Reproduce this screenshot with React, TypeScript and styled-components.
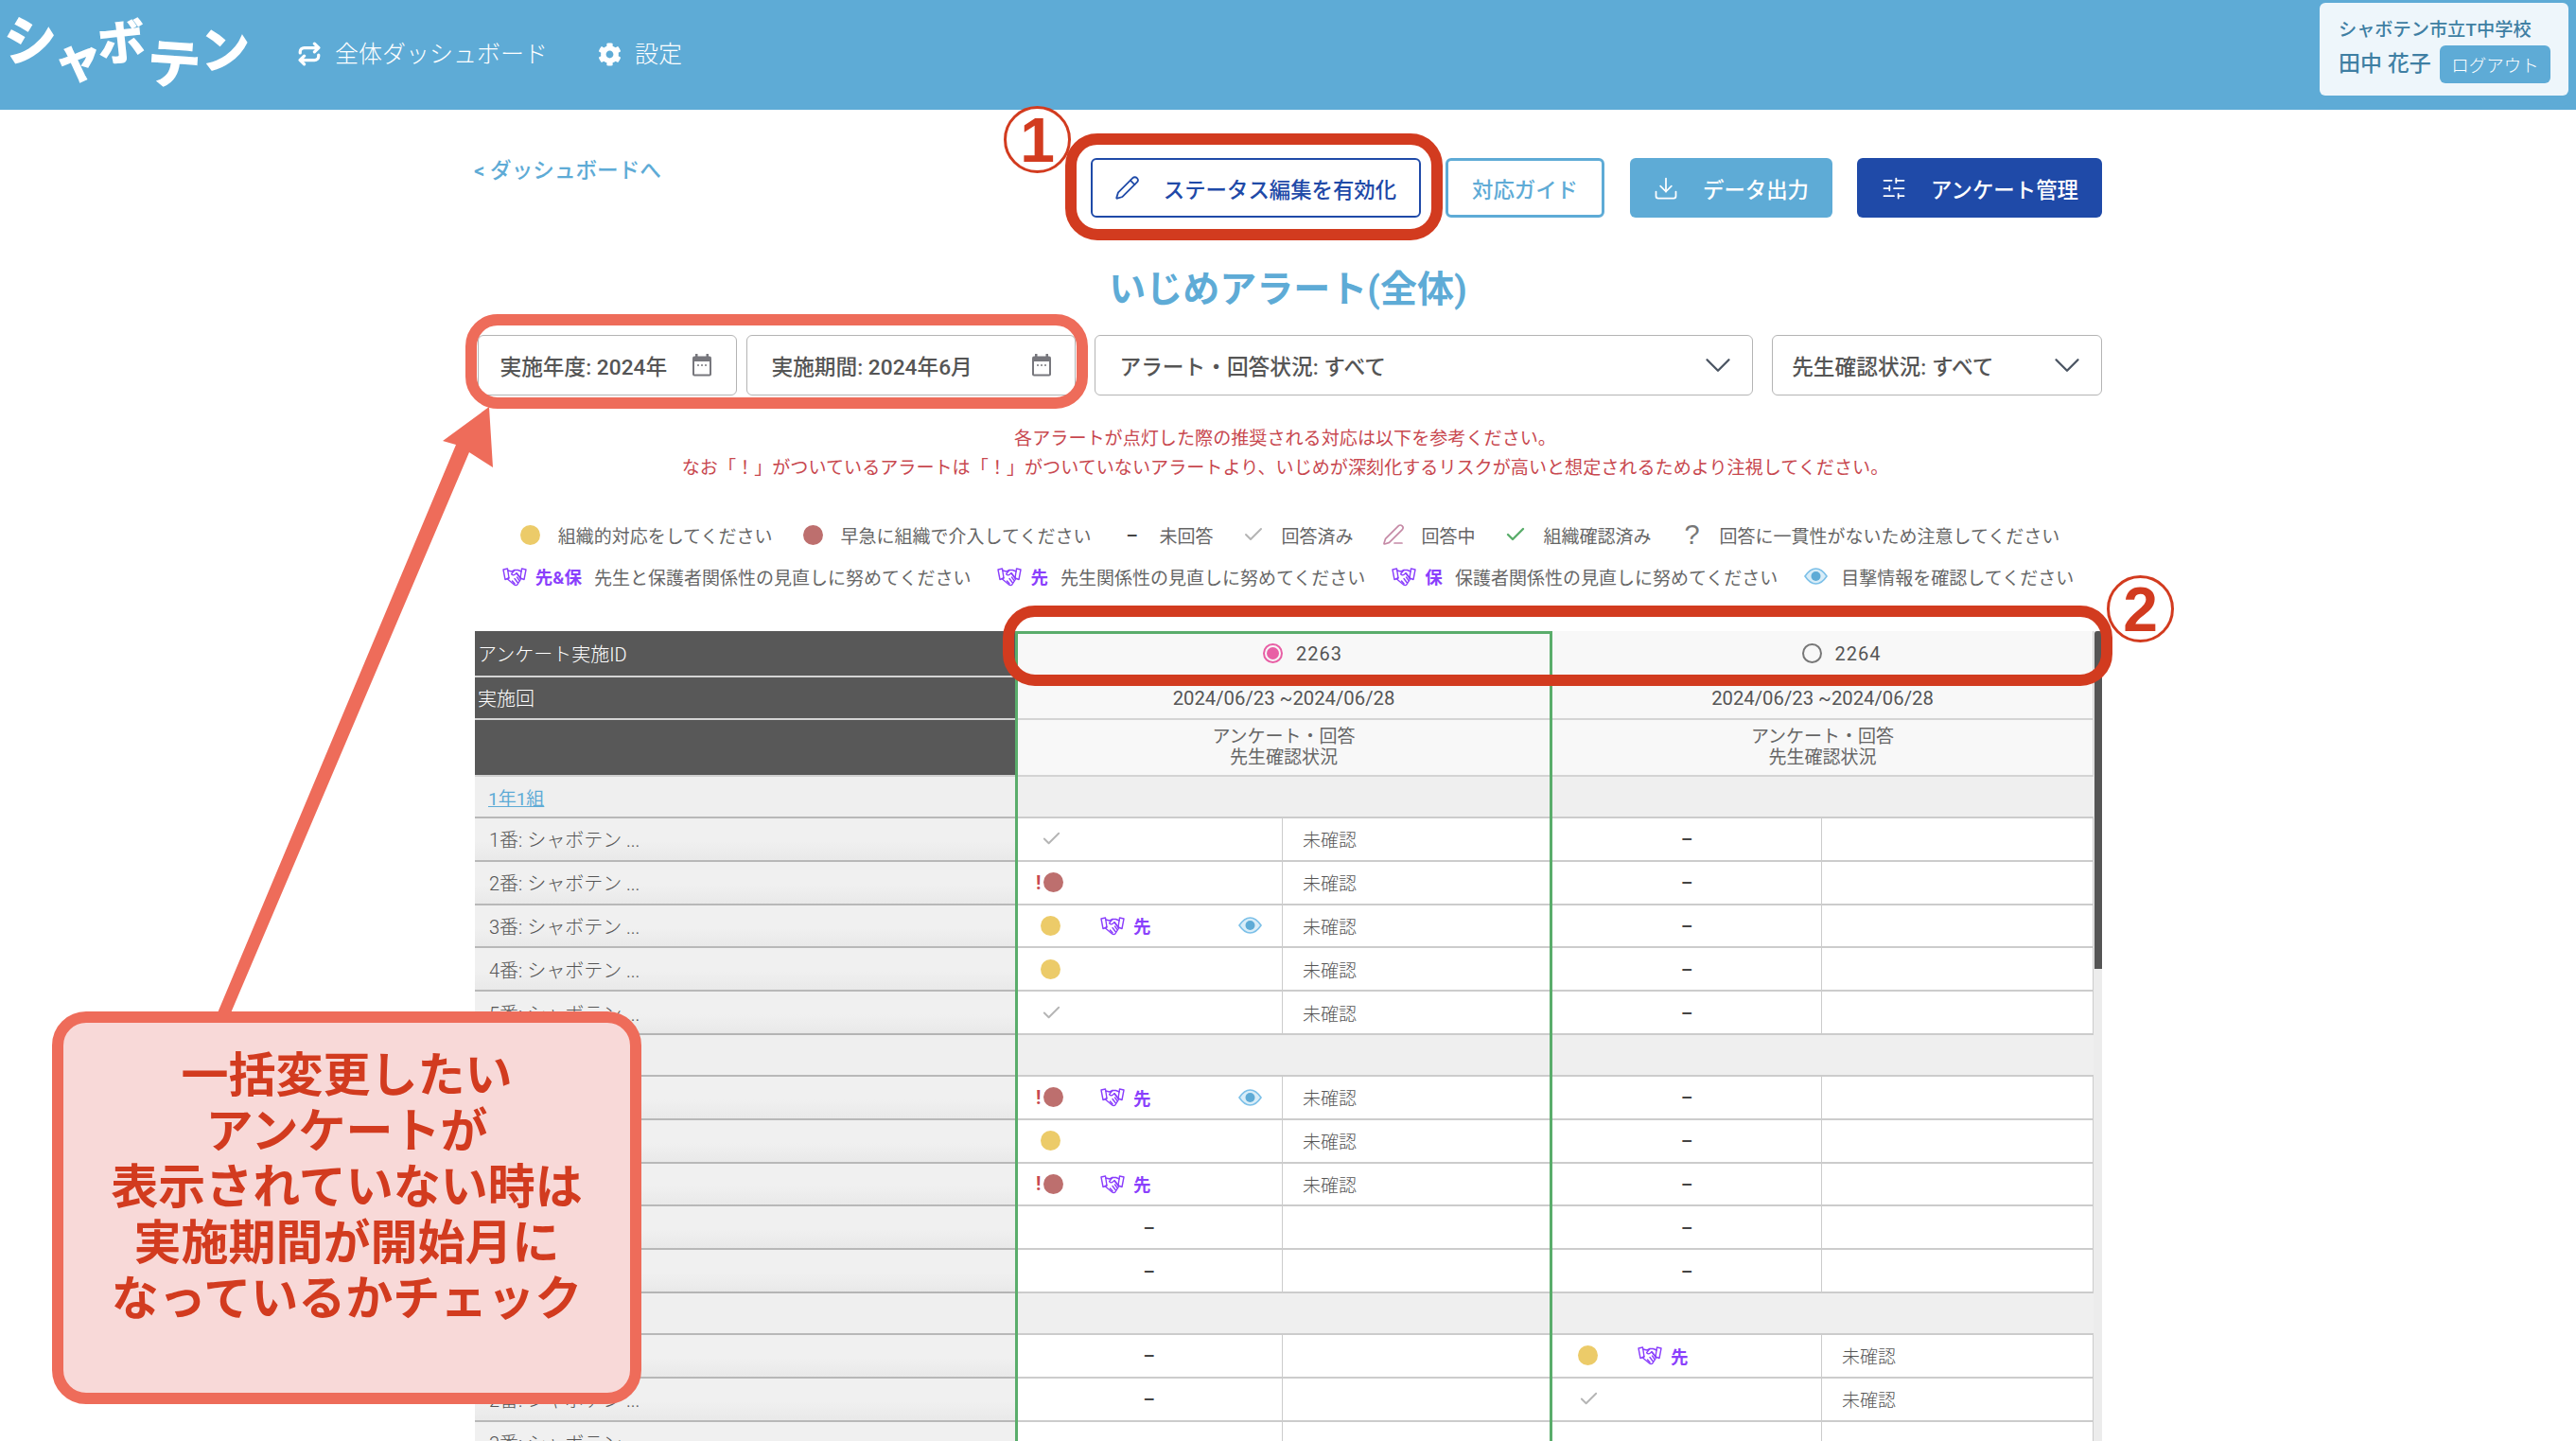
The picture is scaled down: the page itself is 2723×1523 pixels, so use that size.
import React from "react";
import styled, { createGlobalStyle } from "styled-components";
import { Repeat, Pencil, Download, SlidersHorizontal, ChevronDown, Check, PenLine } from "lucide-react";
import { FaCog } from "react-icons/fa";

const BLUE = "#5eabd6";
const NAVY = "#1f4aa8";
const RED = "#d23b1f";
const CORAL = "#ee6c5a";
const PURPLE = "#8a3ffc";
const FONT = `Roboto, "Noto Sans CJK JP", sans-serif`;

const Global = createGlobalStyle`
  html, body { margin: 0; padding: 0; background: #fff; }
  body { font-family: ${FONT}; color: #555; }
  #root { width: 2723px; height: 1523px; overflow: hidden; position: relative; }
  * { box-sizing: border-box; }
`;

const Header = styled.header`
  height: 116px; background: ${BLUE}; display: flex; align-items: flex-start; color: #fff; padding-right: 8px;
`;
const Logo = styled.div`
  display: flex; width: 265px; margin-left: 4px; height: 100px; align-items: flex-start;
  font-family: "Noto Sans CJK JP", sans-serif; font-weight: 700;
`;
const LogoChar = styled.span<{ $size: number; $dy: number; $w: number; $rot?: number }>`
  display: block; width: ${(p) => p.$w}px; height: ${(p) => p.$size + 6}px; font-size: ${(p) => p.$size}px; line-height: 1.1;
  margin-top: ${(p) => p.$dy}px; transform: rotate(${(p) => p.$rot ?? 0}deg);
  -webkit-text-stroke: 1.5px #fff; text-align: center;
`;
const Nav = styled.nav`
  display: flex; align-items: center; height: 114px; margin-left: 45px; gap: 53px; font-size: 25px;
`;
const NavItem = styled.a`
  display: flex; align-items: center; gap: 14px; color: #fff; line-height: 1; font-weight: 300; font-size: 25px;
`;
const UserBox = styled.div`
  margin-left: auto; margin-top: 3px; width: 263px; height: 98px; background: #eef6fb; border-radius: 6px;
  padding: 17px 19px 0 20px; color: #3f7fa3; display: flex; flex-direction: column;
`;
const School = styled.div`
  font-size: 19.2px; line-height: 24px; font-weight: 500; white-space: nowrap;
`;
const UserLine = styled.div`
  display: flex; align-items: center; justify-content: space-between; margin-top: 4px;
`;
const UserName = styled.span`
  font-size: 23px; font-weight: 500; line-height: 40px; white-space: nowrap;
`;
const Logout = styled.button`
  width: 117px; height: 40px; border: 0; border-radius: 6px; background: ${BLUE}; color: #fff;
  font: 300 18.5px ${FONT}; padding: 0;
`;

const Main = styled.main`
  width: 1721px; margin-left: 501px;
`;
const Toolbar = styled.div`
  display: flex; justify-content: space-between; align-items: flex-start; margin-top: 51px; height: 63px;
`;
const BackLink = styled.a`
  color: ${BLUE}; font-size: 22.6px; font-weight: 500; line-height: 26px; margin-top: 1px; white-space: nowrap;
`;
const Actions = styled.div`
  display: flex; gap: 26.5px;
`;
const ActionButton = styled.button<{ $kind: "outlineNavy" | "outlineBlue" | "blue" | "navy"; $w: number }>`
  width: ${(p) => p.$w}px; height: 63px; border-radius: 6px; display: flex; align-items: center; justify-content: center; gap: 25px;
  font: 500 22.4px ${FONT}; padding: 0; white-space: nowrap;
  background: ${(p) => (p.$kind === "blue" ? BLUE : p.$kind === "navy" ? NAVY : "#fff")};
  color: ${(p) => (p.$kind === "outlineNavy" ? NAVY : p.$kind === "outlineBlue" ? BLUE : "#fff")};
  border: ${(p) => (p.$kind === "outlineNavy" ? `2px solid ${NAVY}` : p.$kind === "outlineBlue" ? `3px solid ${BLUE}` : "0")};
`;
const Title = styled.h1`
  margin: 51px 0 0; text-align: center; font-size: 39px; line-height: 50px; font-weight: 700; color: ${BLUE};
`;
const Filters = styled.div`
  display: flex; margin: 23px 0 0 3.5px; gap: 20px;
`;
const PeriodGroup = styled.div`
  display: flex; gap: 10px;
`;
const Filter = styled.div<{ $w: number; $pad: number; $end: number }>`
  width: ${(p) => p.$w}px; height: 64px; border: 1.5px solid #b4b4b4; border-radius: 6px; background: #fff;
  display: flex; align-items: center; justify-content: space-between;
  padding: 0 ${(p) => p.$end}px 0 ${(p) => p.$pad}px;
  font-size: 22.7px; font-weight: 500; color: #555; white-space: nowrap;
`;
const Chevron = styled(ChevronDown)`
  margin: 0 -11.5px; color: #4b5563; flex: none;
`;
const Notes = styled.div`
  margin-top: 30px; text-align: center; font-size: 19.1px; line-height: 31px; color: #c8484f; font-weight: 400; padding-right: 6px;
`;
const LegendRow = styled.div<{ $top: number }>`
  display: flex; justify-content: center; align-items: center; gap: 28px; height: 30px; margin-top: ${(p) => p.$top}px;
  font-size: 19px; color: #666; white-space: nowrap;
`;
const LegendItem = styled.div`
  display: flex; align-items: center; gap: 14px;
`;
const LegendIcon = styled.span`
  width: 30px; display: flex; justify-content: center; align-items: center;
`;
const LegendHelp = styled.span`
  font: 400 29px "Liberation Sans", sans-serif; color: #777;
`;
const Badge = styled.span`
  display: inline-flex; align-items: center; gap: 9px; color: ${PURPLE}; font-weight: 700; font-size: 18.5px; margin-right: -1px;
`;
const Dot = styled.span<{ $c: "y" | "r" }>`
  display: block; width: 21px; height: 21px; border-radius: 50%; background: ${(p) => (p.$c === "y" ? "#eccb69" : "#bd6f6e")}; flex: none;
`;
const Dash = styled.span`
  font-weight: 700; font-size: 19px; line-height: 1; color: #444;
`;

const TableArea = styled.div`
  position: relative; display: flex; align-items: flex-start; margin: 43px 0 0 1px;
`;
const Table = styled.div`
  display: grid; width: 1711px; grid-template-columns: 572px 282px 285px 285px 287px; align-content: start;
`;
const HeadLabel = styled.div<{ $h: number }>`
  height: ${(p) => p.$h}px; background: #585858; color: #fff; font-size: 20px; font-weight: 300; padding-left: 3px;
  display: flex; align-items: center; border-bottom: 2px solid #d4d4d4;
`;
const HeadCell = styled.div<{ $h: number }>`
  grid-column: span 2; height: ${(p) => p.$h}px; background: #f8f8f8; color: #555; font-size: 20.3px;
  display: flex; flex-direction: column; align-items: center; justify-content: center; text-align: center;
  border-bottom: 2px solid #d4d4d4; border-right: 1px solid #d4d4d4;
`;
const HeadTwoLine = styled.div`
  font-size: 19px; line-height: 22px; color: #666; font-weight: 400;
`;
const RadioLine = styled.label`
  display: flex; align-items: center; gap: 14px; font-size: 20px; letter-spacing: 1px; margin-left: 40px;
`;
const Radio = styled.span<{ $on?: boolean }>`
  width: 21px; height: 21px; border-radius: 50%; border: 2px solid ${(p) => (p.$on ? "#e85fa5" : "#777")};
  padding: 2px; background-clip: content-box; background-color: ${(p) => (p.$on ? "#e85fa5" : "transparent")};
`;
const GroupName = styled.div`
  height: 44px; background: #efefef; border-bottom: 2px solid #b8b8b8; padding-left: 14px;
  display: flex; align-items: center; font-size: 19px; box-shadow: 3px 0 6px rgba(0,0,0,.05);
`;
const GroupLink = styled.a`
  color: ${BLUE}; text-decoration: underline;
`;
const GroupCell = styled.div`
  grid-column: span 2; height: 44px; background: #efefef; border-bottom: 2px solid #ccc;
`;
const NameCell = styled.div`
  height: 45.8px; background: linear-gradient(#f0f0f0 55%, #e9e9e9); border-bottom: 2px solid #b8b8b8; padding-left: 15px;
  display: flex; align-items: center; font-size: 20px; color: #555; font-weight: 300;
`;
const StatusCell = styled.div<{ $center?: boolean; $pad: number }>`
  height: 45.8px; border-bottom: 2px solid #ccc; border-right: 1px solid #ccc; background: #fff;
  display: ${(p) => (p.$center ? "flex" : "grid")}; align-items: center; justify-content: ${(p) => (p.$center ? "center" : "start")};
  grid-template-columns: 63px 146px auto; padding-left: ${(p) => (p.$center ? 0 : p.$pad)}px;
`;
const MarkSlot = styled.span`
  display: flex; align-items: center;
`;
const Bang = styled.span`
  width: 8px; margin-left: -5px; color: #c8484f; font-size: 20px; font-weight: 700; line-height: 1;
`;
const ConfirmCell = styled.div`
  height: 45.8px; border-bottom: 2px solid #ccc; border-right: 1px solid #ccc; background: #fff; padding-left: 21px;
  display: flex; align-items: center; font-size: 19px; color: #555; font-weight: 300;
`;
const Track = styled.div`
  width: 10px; background: #ececec; height: 900px;
`;
const Thumb = styled.div`
  width: 8px; height: 357px; background: #555; border-radius: 3px 3px 0 0; margin-left: 1px;
`;
const SelectedColumn = styled.div`
  position: absolute; left: 571px; top: 0; width: 568px; height: 900px;
  border: 3px solid #5aad6b; border-bottom: 0; pointer-events: none;
`;

const Ring = styled.div<{ $c: string; $l: number; $t: number; $w: number; $h: number }>`
  position: absolute; left: ${(p) => p.$l}px; top: ${(p) => p.$t}px; width: ${(p) => p.$w}px; height: ${(p) => p.$h}px;
  border: 12px solid ${(p) => p.$c}; border-radius: 34px; pointer-events: none;
`;
const CircledNumber = styled.div<{ $l: number; $t: number }>`
  position: absolute; left: ${(p) => p.$l}px; top: ${(p) => p.$t}px; width: 71px; height: 71px; border-radius: 50%;
  border: 3px solid ${RED}; background: #fff; color: ${RED}; display: flex; align-items: center; justify-content: center;
  font: 700 66px/1 "Liberation Sans", sans-serif;
`;
const ArrowSvg = styled.svg`
  position: absolute; left: 0; top: 0; pointer-events: none;
`;
const Callout = styled.div`
  position: absolute; left: 55px; top: 1069px; width: 623px; height: 415px; border: 12px solid ${CORAL}; border-radius: 36px;
  background: #f8d9d8; color: ${RED}; font-size: 50px; font-weight: 700; line-height: 59px; text-align: center; padding-top: 27px; white-space: nowrap;
`;

const Calendar = () => (
  <svg width="22" height="24" viewBox="0 0 22 24" aria-hidden="true">
    <rect x="4" y="0" width="2.5" height="5" fill="#77777d" />
    <rect x="15.5" y="0" width="2.5" height="5" fill="#77777d" />
    <rect x="1" y="2.5" width="20" height="21" rx="2" fill="#77777d" />
    <rect x="3" y="8" width="16" height="13.5" fill="#fff" />
    <circle cx="7" cy="12" r="1" fill="#77777d" />
    <circle cx="11" cy="12" r="1" fill="#77777d" />
    <circle cx="15" cy="12" r="1" fill="#77777d" />
  </svg>
);
const Eye = () => (
  <svg width="25" height="18" viewBox="0 0 25 18" aria-hidden="true">
    <path d="M1 9C5 3 9 1 12.5 1S20 3 24 9c-4 6-8 8-11.5 8S5 15 1 9Z" fill="#d9edf8" stroke="#7cc0e8" strokeWidth="1.6" />
    <circle cx="12.5" cy="9" r="5" fill="#5eabd6" />
  </svg>
);
const Hand = () => (
  <svg width="26" height="21" viewBox="0 0 26 21" fill="none" stroke={PURPLE} strokeWidth="1.4" strokeLinejoin="round" strokeLinecap="round" aria-hidden="true">
    <path d="M1 3 5.5 2l1.5 10-4 1.5Z" />
    <path d="M25 3l-4.5-1L19 12l4 1.5Z" />
    <path d="M5.8 4 10 5 13 3.5h3.5L20.2 5" />
    <path d="M13 3.5 9.6 7.6c.8 1.4 2.4 1.6 3.6.6l1.8-1.4 4 5.2" />
    <path d="M6.8 11.5 5.5 13l6.5 5.5c1.4 1.2 2.8 1.4 3.8.5l3.8-6" />
    <path d="M15 6.8 19.2 12M10.5 15l2.6 3M13 12.5l3.4 4.5M15.5 11l2.6 3.6" />
  </svg>
);

type Mark = "y" | "r" | "c" | "-";
type Status = { m: Mark; hand?: boolean; eye?: boolean };
type Row = { group: string } | { name: string; a: Status; b: Status };
const dash: Status = { m: "-" };
const yes = (s: Status) => s.m !== "-";

const rows: Row[] = [
  { group: "1年1組" },
  { name: "1番: シャボテン ...", a: { m: "c" }, b: dash },
  { name: "2番: シャボテン ...", a: { m: "r" }, b: dash },
  { name: "3番: シャボテン ...", a: { m: "y", hand: true, eye: true }, b: dash },
  { name: "4番: シャボテン ...", a: { m: "y" }, b: dash },
  { name: "5番: シャボテン ...", a: { m: "c" }, b: dash },
  { group: "1年2組" },
  { name: "1番: シャボテン ...", a: { m: "r", hand: true, eye: true }, b: dash },
  { name: "2番: シャボテン ...", a: { m: "y" }, b: dash },
  { name: "3番: シャボテン ...", a: { m: "r", hand: true }, b: dash },
  { name: "4番: シャボテン ...", a: dash, b: dash },
  { name: "5番: シャボテン ...", a: dash, b: dash },
  { group: "1年3組" },
  { name: "1番: シャボテン ...", a: dash, b: { m: "y", hand: true } },
  { name: "2番: シャボテン ...", a: dash, b: { m: "c" } },
  { name: "3番: シャボテン ...", a: dash, b: dash },
];

const StatusView = ({ s, pad }: { s: Status; pad: number }) => {
  if (s.m === "-") return <StatusCell $center $pad={pad}><Dash>–</Dash></StatusCell>;
  return (
    <StatusCell $pad={pad}>
      <MarkSlot>
        {s.m === "r" && <Bang>!</Bang>}
        {s.m === "r" && <Dot $c="r" />}
        {s.m === "y" && <Dot $c="y" />}
        {s.m === "c" && <Check size={23} color="#b5b5b5" strokeWidth={2} />}
      </MarkSlot>
      <MarkSlot>{s.hand && <Badge><Hand />先</Badge>}</MarkSlot>
      <MarkSlot>{s.eye && <Eye />}</MarkSlot>
    </StatusCell>
  );
};

export default function App() {
  return (
    <>
      <Global />
      <Header>
        <Logo>
          <LogoChar $size={56} $dy={8} $w={52} $rot={-3}>シ</LogoChar>
          <LogoChar $size={52} $dy={31} $w={44} $rot={-10}>ャ</LogoChar>
          <LogoChar $size={50} $dy={14} $w={56} $rot={-6}>ボ</LogoChar>
          <LogoChar $size={56} $dy={33} $w={56} $rot={4}>テ</LogoChar>
          <LogoChar $size={52} $dy={20} $w={52} $rot={-4}>ン</LogoChar>
        </Logo>
        <Nav>
          <NavItem><Repeat size={26} strokeWidth={3} />全体ダッシュボード</NavItem>
          <NavItem><FaCog size={25} />設定</NavItem>
        </Nav>
        <UserBox>
          <School>シャボテン市立T中学校</School>
          <UserLine>
            <UserName>田中 花子</UserName>
            <Logout>ログアウト</Logout>
          </UserLine>
        </UserBox>
      </Header>
      <Main>
        <Toolbar>
          <BackLink>&lt; ダッシュボードへ</BackLink>
          <Actions>
            <ActionButton $kind="outlineNavy" $w={349}><Pencil size={27} strokeWidth={1.6} />ステータス編集を有効化</ActionButton>
            <ActionButton $kind="outlineBlue" $w={168}>対応ガイド</ActionButton>
            <ActionButton $kind="blue" $w={214}><Download size={28} strokeWidth={1.5} />データ出力</ActionButton>
            <ActionButton $kind="navy" $w={259}><SlidersHorizontal size={28} strokeWidth={1.5} />アンケート管理</ActionButton>
          </Actions>
        </Toolbar>
        <Title>いじめアラート(全体)</Title>
        <Filters>
          <PeriodGroup>
            <Filter $w={274} $pad={23} $end={25}>実施年度: 2024年<Calendar /></Filter>
            <Filter $w={348} $pad={26} $end={24}>実施期間: 2024年6月<Calendar /></Filter>
          </PeriodGroup>
          <Filter $w={697} $pad={26} $end={25}>アラート・回答状況: すべて<Chevron size={46} strokeWidth={1.2} /></Filter>
          <Filter $w={349} $pad={20} $end={25}>先生確認状況: すべて<Chevron size={46} strokeWidth={1.2} /></Filter>
        </Filters>
        <Notes>
          各アラートが点灯した際の推奨される対応は以下を参考ください。<br />
          なお「！」がついているアラートは「！」がついていないアラートより、いじめが深刻化するリスクが高いと想定されるためより注視してください。
        </Notes>
        <LegendRow $top={40}>
          <LegendItem><LegendIcon><Dot $c="y" /></LegendIcon>組織的対応をしてください</LegendItem>
          <LegendItem><LegendIcon><Dot $c="r" /></LegendIcon>早急に組織で介入してください</LegendItem>
          <LegendItem><LegendIcon><Dash>–</Dash></LegendIcon>未回答</LegendItem>
          <LegendItem><LegendIcon><Check size={24} color="#b5b5b5" strokeWidth={2} /></LegendIcon>回答済み</LegendItem>
          <LegendItem><LegendIcon><PenLine size={24} color="#c58aa6" strokeWidth={1.7} /></LegendIcon>回答中</LegendItem>
          <LegendItem><LegendIcon><Check size={24} color="#5aad6b" strokeWidth={2.4} /></LegendIcon>組織確認済み</LegendItem>
          <LegendItem><LegendIcon><LegendHelp>?</LegendHelp></LegendIcon>回答に一貫性がないため注意してください</LegendItem>
        </LegendRow>
        <LegendRow $top={14}>
          <LegendItem><Badge><Hand />先&amp;保</Badge>先生と保護者関係性の見直しに努めてください</LegendItem>
          <LegendItem><Badge><Hand />先</Badge>先生関係性の見直しに努めてください</LegendItem>
          <LegendItem><Badge><Hand />保</Badge>保護者関係性の見直しに努めてください</LegendItem>
          <LegendItem><Eye />目撃情報を確認してください</LegendItem>
        </LegendRow>
        <TableArea>
          <Table>
            <HeadLabel $h={49}>アンケート実施ID</HeadLabel>
            <HeadCell $h={49}><RadioLine><Radio $on />2263</RadioLine></HeadCell>
            <HeadCell $h={49}><RadioLine><Radio />2264</RadioLine></HeadCell>
            <HeadLabel $h={45}>実施回</HeadLabel>
            <HeadCell $h={45}>2024/06/23 ~2024/06/28</HeadCell>
            <HeadCell $h={45}>2024/06/23 ~2024/06/28</HeadCell>
            <HeadLabel $h={60} />
            <HeadCell $h={60}><HeadTwoLine>アンケート・回答<br />先生確認状況</HeadTwoLine></HeadCell>
            <HeadCell $h={60}><HeadTwoLine>アンケート・回答<br />先生確認状況</HeadTwoLine></HeadCell>
            {rows.map((r, i) =>
              "group" in r ? (
                <React.Fragment key={i}>
                  <GroupName><GroupLink>{r.group}</GroupLink></GroupName>
                  <GroupCell />
                  <GroupCell />
                </React.Fragment>
              ) : (
                <React.Fragment key={i}>
                  <NameCell>{r.name}</NameCell>
                  <StatusView s={r.a} pad={26} />
                  <ConfirmCell>{yes(r.a) ? "未確認" : ""}</ConfirmCell>
                  <StatusView s={r.b} pad={27} />
                  <ConfirmCell>{yes(r.b) ? "未確認" : ""}</ConfirmCell>
                </React.Fragment>
              )
            )}
          </Table>
          <Track><Thumb /></Track>
          <SelectedColumn />
        </TableArea>
      </Main>

      <ArrowSvg width="560" height="1100" viewBox="0 0 560 1100" aria-hidden="true">
        <polygon points="517,430 521,494 496,478 240,1080 226,1080 482,470 468,466" fill={CORAL} />
      </ArrowSvg>
      <Ring $c={RED} $l={1126} $t={141} $w={399} $h={113} />
      <Ring $c={CORAL} $l={492} $t={332} $w={658} $h={100} />
      <Ring $c={RED} $l={1060} $t={640} $w={1173} $h={85} />
      <CircledNumber $l={1061} $t={112}>1</CircledNumber>
      <CircledNumber $l={2227} $t={608}>2</CircledNumber>
      <Callout>
        一括変更したい<br />
        アンケートが<br />
        表示されていない時は<br />
        実施期間が開始月に<br />
        なっているかチェック
      </Callout>
    </>
  );
}
